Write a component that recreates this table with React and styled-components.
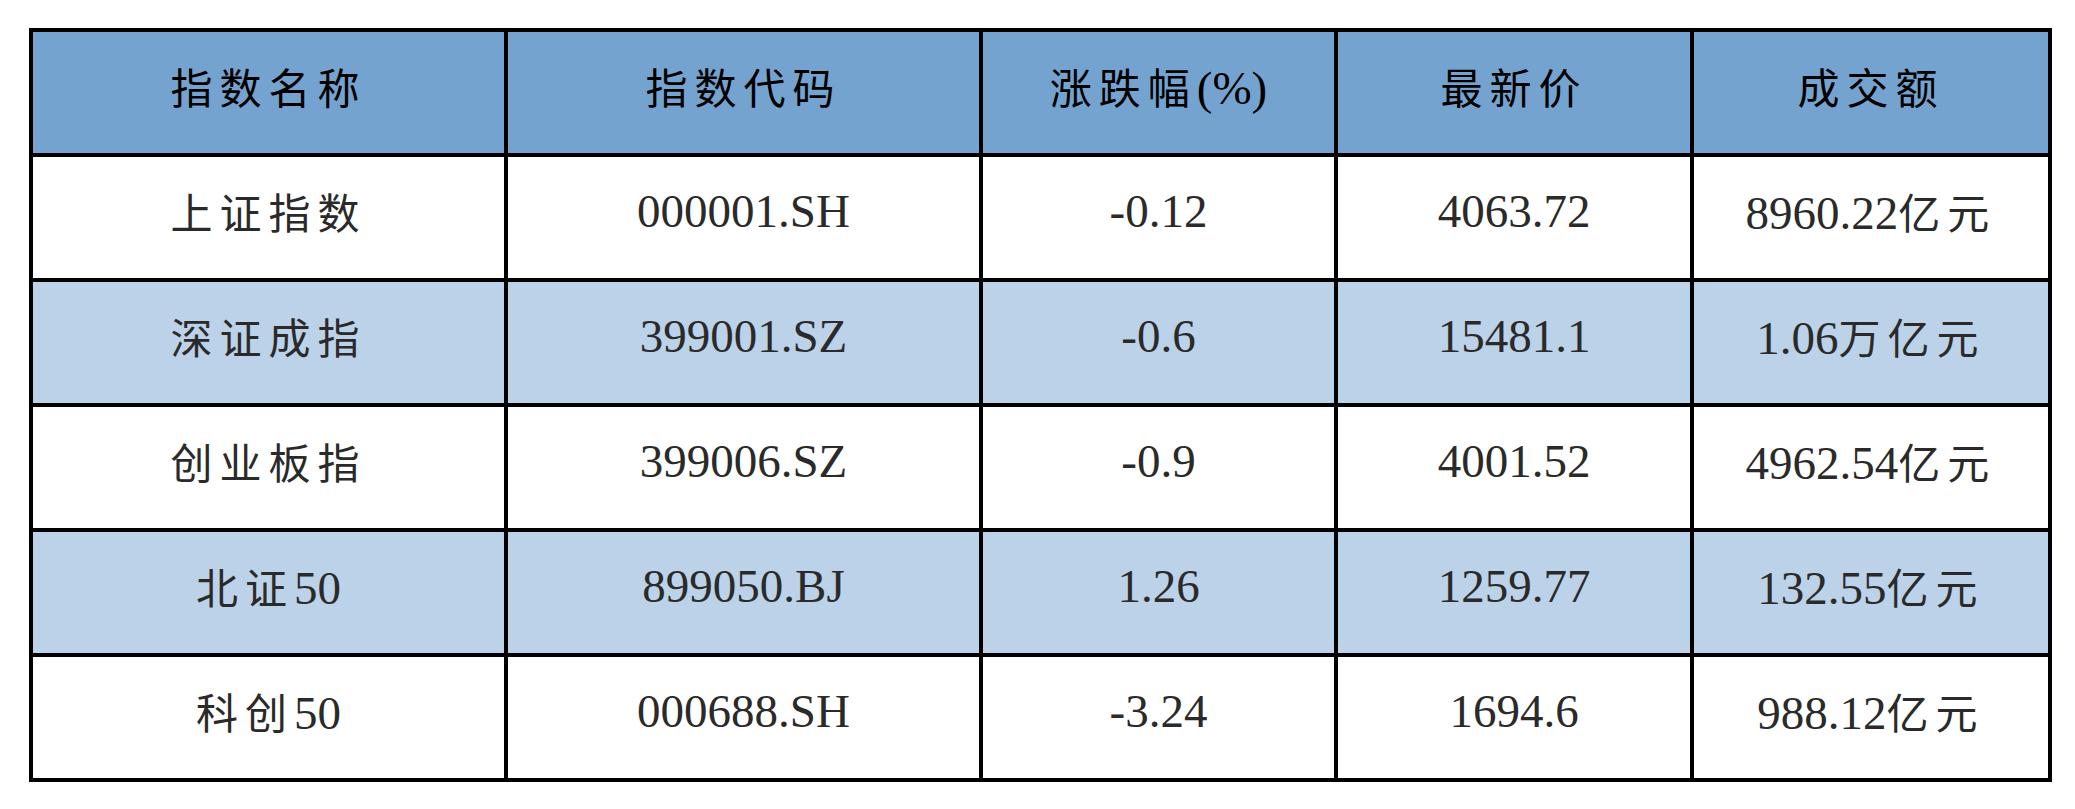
import { styled, createGlobalStyle } from 'styled-components';

const GlobalStyle = createGlobalStyle`
  body {
    margin: 0;
    background: #ffffff;
    font-family: "Liberation Serif", "Noto Sans CJK SC", serif;
  }
`;

const columns = ['指数名称', '指数代码', '涨跌幅(%)', '最新价', '成交额'];
const widths = [475, 475, 355, 356, 358];

const rows = [
  ['上证指数', '000001.SH', '-0.12', '4063.72', '8960.22亿元'],
  ['深证成指', '399001.SZ', '-0.6', '15481.1', '1.06万亿元'],
  ['创业板指', '399006.SZ', '-0.9', '4001.52', '4962.54亿元'],
  ['北证50', '899050.BJ', '1.26', '1259.77', '132.55亿元'],
  ['科创50', '000688.SH', '-3.24', '1694.6', '988.12亿元'],
];

// 汉字部分单独加字距
const renderText = (text) =>
  text
    .split(/([\u4e00-\u9fff]+)/)
    .filter(Boolean)
    .map((part, i) =>
      /[\u4e00-\u9fff]/.test(part) ? <Han key={i}>{part}</Han> : <span key={i}>{part}</span>
    );

export default function App() {
  return (
    <>
      <GlobalStyle />
      <Page>
        <Table>
          <colgroup>
            {widths.map((w, i) => (
              <col key={i} style={{ width: w }} />
            ))}
          </colgroup>
          <thead>
            <tr>
              {columns.map((c) => (
                <HeadCell key={c}>{renderText(c)}</HeadCell>
              ))}
            </tr>
          </thead>
          <tbody>
            {rows.map((row, r) => (
              <Row key={r} $striped={r % 2 === 1}>
                {row.map((cell, c) => (
                  <Cell key={c}>{renderText(cell)}</Cell>
                ))}
              </Row>
            ))}
          </tbody>
        </Table>
      </Page>
    </>
  );
}

const Page = styled.div`
  padding: 28px 0 0 29px;
`;

const Table = styled.table`
  width: 2019px;
  table-layout: fixed;
  border-collapse: collapse;
  border: 4px solid #000000;
`;

const HeadCell = styled.th`
  height: 107px;
  padding: 0 0 14px;
  background: #74a3cf;
  border: 4px solid #000000;
  color: #000000;
  font-size: 47px;
  font-weight: 400;
  text-align: center;
  vertical-align: middle;
`;

const Row = styled.tr`
  background: ${(p) => (p.$striped ? '#bcd2e8' : '#ffffff')};
`;

const Cell = styled.td`
  height: 107px;
  padding: 0 0 14px;
  border: 4px solid #000000;
  color: #2a2a2a;
  font-size: 47px;
  text-align: center;
  vertical-align: middle;
`;

const Han = styled.span`
  font-family: "Noto Sans CJK SC", sans-serif;
  font-size: 42px;
  letter-spacing: 7px;
`;
